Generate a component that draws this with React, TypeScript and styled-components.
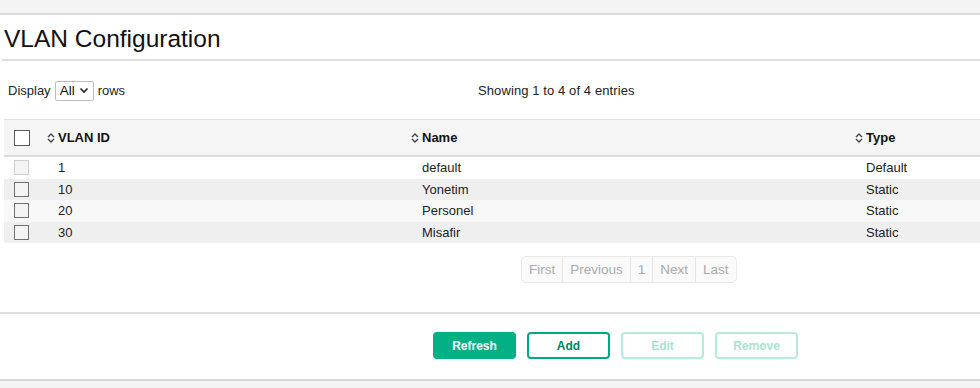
import styled, { createGlobalStyle } from 'styled-components';

const GlobalStyle = createGlobalStyle`
  html, body {
    margin: 0;
    padding: 0;
    background: #ffffff;
    font-family: 'Liberation Sans', Arial, sans-serif;
    color: #222222;
  }
  * {
    box-sizing: border-box;
  }
`;

type Vlan = { id: string; name: string; type: string; locked?: boolean };

const vlans: Vlan[] = [
  { id: '1', name: 'default', type: 'Default', locked: true },
  { id: '10', name: 'Yonetim', type: 'Static' },
  { id: '20', name: 'Personel', type: 'Static' },
  { id: '30', name: 'Misafir', type: 'Static' },
];

const rowColors = ['#ffffff', '#efefef', '#f8f8f8', '#efefef'];

const SortIcon = () => (
  <svg width="8" height="12" viewBox="0 0 8 12">
    <polyline points="1,5 4,2 7,5" fill="none" stroke="#444" strokeWidth="1.4" />
    <polyline points="1,7 4,10 7,7" fill="none" stroke="#444" strokeWidth="1.4" />
  </svg>
);

const App: React.FC = () => {
  return (
    <>
      <GlobalStyle />
      <Page>
        <TopBand />
        <TitleBar>
          <h1>VLAN Configuration</h1>
        </TitleBar>
        <Toolbar>
          <LengthControl>
            Display
            <FakeSelect>
              All
              <svg width="10" height="7" viewBox="0 0 10 7">
                <polyline points="1.5,1.5 5,5 8.5,1.5" fill="none" stroke="#222" strokeWidth="1.6" />
              </svg>
            </FakeSelect>
            rows
          </LengthControl>
          <Info>Showing 1 to 4 of 4 entries</Info>
        </Toolbar>
        <Table>
          <HeadRow>
            <Cell>
              <CheckBox $variant="head" />
            </Cell>
            <HeadCell>
              <SortIcon />
              VLAN ID
            </HeadCell>
            <HeadCell>
              <SortIcon />
              Name
            </HeadCell>
            <HeadCell>
              <SortIcon />
              Type
            </HeadCell>
          </HeadRow>
          {vlans.map((v, i) => (
            <BodyRow key={v.id} $bg={rowColors[i]}>
              <Cell>
                <CheckBox $variant={v.locked ? 'disabled' : 'row'} />
              </Cell>
              <DataCell>{v.id}</DataCell>
              <DataCell>{v.name}</DataCell>
              <DataCell>{v.type}</DataCell>
            </BodyRow>
          ))}
        </Table>
        <PagerRow>
          <Pager>
            <span>First</span>
            <span>Previous</span>
            <span>1</span>
            <span>Next</span>
            <span>Last</span>
          </Pager>
        </PagerRow>
        <Footer>
          <Button $kind="primary">Refresh</Button>
          <Button $kind="outline">Add</Button>
          <Button $kind="disabled">Edit</Button>
          <Button $kind="disabled">Remove</Button>
        </Footer>
        <BottomBand />
      </Page>
    </>
  );
};

export default App;

const Page = styled.div`
  width: 980px;
  height: 388px;
  overflow: hidden;
  display: flex;
  flex-direction: column;
  background: #ffffff;
`;

const TopBand = styled.div`
  height: 15px;
  background: #f4f4f4;
  border-bottom: 2px solid #d9d9d9;
  flex-shrink: 0;
`;

const TitleBar = styled.div`
  margin: 0 0 0 2px;
  padding: 9px 2px 5px;
  border-bottom: 2px solid #dedede;

  > h1 {
    margin: 0;
    font-weight: 400;
    font-size: 24.5px;
    line-height: 30px;
    color: #111111;
  }
`;

const Toolbar = styled.div`
  height: 58px;
  display: grid;
  grid-template-columns: 470px auto 1fr;
  align-items: center;
  padding: 1px 0 0 8px;
  font-size: 13px;
  color: #222222;
`;

const LengthControl = styled.div`
  display: flex;
  align-items: center;
  gap: 4px;
`;

const FakeSelect = styled.div`
  display: flex;
  align-items: center;
  gap: 4px;
  height: 20px;
  width: 39px;
  padding: 0 4px;
  border: 1px solid #bdbdbd;
  border-radius: 2px;
  font-size: 13.5px;
  color: #111111;
`;

const Info = styled.div`
  font-size: 13px;
  letter-spacing: 0.1px;
`;

const Table = styled.div`
  margin-left: 4px;
  border-top: 1px solid #e2e2e2;
`;

const HeadRow = styled.div`
  display: grid;
  grid-template-columns: 40px 364px 444px 1fr;
  height: 37px;
  align-items: center;
  background: #f5f5f5;
  border-bottom: 2px solid #dcdcdc;
`;

const BodyRow = styled.div<{ $bg: string }>`
  display: grid;
  grid-template-columns: 40px 364px 444px 1fr;
  height: 21.5px;
  align-items: center;
  background: ${(p) => p.$bg};
`;

const Cell = styled.div`
  padding-left: 10px;
  display: flex;
  align-items: center;
`;

const HeadCell = styled.div`
  display: flex;
  align-items: center;
  gap: 3px;
  padding-left: 3px;
  font-weight: 700;
  font-size: 13px;
  color: #111111;
`;

const DataCell = styled.div`
  padding-left: 14px;
  font-size: 13px;
  color: #222222;
`;

const CheckBox = styled.span<{ $variant: 'head' | 'row' | 'disabled' }>`
  display: inline-block;
  width: ${(p) => (p.$variant === 'head' ? '16px' : '15px')};
  height: ${(p) => (p.$variant === 'head' ? '16px' : '15px')};
  border: ${(p) =>
    p.$variant === 'head'
      ? '1.5px solid #5a5a5a'
      : p.$variant === 'row'
      ? '1px solid #707070'
      : '1px solid #cfcfcf'};
  background: ${(p) => (p.$variant === 'head' ? '#ffffff' : '#f4f4f4')};
`;

const PagerRow = styled.div`
  padding: 13px 0 0 521px;
  height: 69px;
`;

const Pager = styled.div`
  display: inline-flex;
  height: 27px;
  border: 1px solid #e8e8e8;
  border-radius: 5px;
  background: #fafafa;
  overflow: hidden;

  > span {
    display: flex;
    align-items: center;
    padding: 0 7px;
    font-size: 13.5px;
    color: #ababab;
    border-left: 1px solid #e6e6e6;
  }

  > span:first-child {
    border-left: none;
  }
`;

const Footer = styled.div`
  display: flex;
  gap: 11px;
  padding: 18px 0 0 433px;
  height: 67px;
  border-top: 2px solid #dedede;
  flex-shrink: 0;
`;

const Button = styled.button<{ $kind: 'primary' | 'outline' | 'disabled' }>`
  width: 83px;
  height: 27px;
  border-radius: 4px;
  font-family: 'Liberation Sans', Arial, sans-serif;
  font-weight: 700;
  font-size: 12px;
  cursor: pointer;
  border: 2px solid
    ${(p) => (p.$kind === 'primary' ? '#01b085' : p.$kind === 'outline' ? '#01a982' : '#b3ecdc')};
  background: ${(p) => (p.$kind === 'primary' ? '#01b085' : '#ffffff')};
  color: ${(p) => (p.$kind === 'primary' ? '#ffffff' : p.$kind === 'outline' ? '#00845f' : '#a6e4d2')};
`;

const BottomBand = styled.div`
  flex: 1;
  background: #f4f4f4;
  border-top: 2px solid #d6d6d6;
`;
